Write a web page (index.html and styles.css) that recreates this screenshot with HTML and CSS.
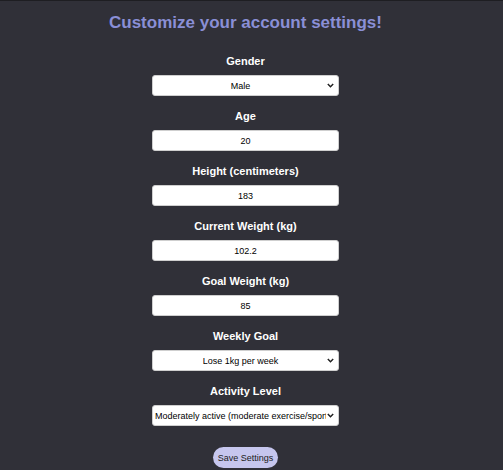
FILE: index.html
```html
<!DOCTYPE html>
<html>
<head>
<meta charset="utf-8">
<link rel="stylesheet" href="styles.css">
</head>
<body>
<div class="page">
  <h1 class="title">Customize your account settings!</h1>
  <form class="form">
    <div class="field">
      <label class="label">Gender</label>
      <select class="control select"><option>Male</option><option>Female</option></select>
    </div>
    <div class="field">
      <label class="label">Age</label>
      <input class="control" type="text" value="20">
    </div>
    <div class="field">
      <label class="label">Height (centimeters)</label>
      <input class="control" type="text" value="183">
    </div>
    <div class="field">
      <label class="label">Current Weight (kg)</label>
      <input class="control" type="text" value="102.2">
    </div>
    <div class="field">
      <label class="label">Goal Weight (kg)</label>
      <input class="control" type="text" value="85">
    </div>
    <div class="field">
      <label class="label">Weekly Goal</label>
      <select class="control select"><option>Lose 1kg per week</option></select>
    </div>
    <div class="field">
      <label class="label">Activity Level</label>
      <select class="control select select-left"><option>Moderately active (moderate exercise/sports 3-5 days/week)</option></select>
    </div>
    <button class="save" type="button">Save Settings</button>
  </form>
</div>
</body>
</html>
```
FILE: styles.css
```css
html, body {
  margin: 0;
  padding: 0;
  background: #303038;
  height: 100%;
}
body {
  border-top: 1px solid #1e1e22;
  box-sizing: border-box;
  font-family: "Liberation Sans", Arial, sans-serif;
}
.page {
  width: 491px;
  display: flex;
  flex-direction: column;
  align-items: center;
}
.title {
  margin: 12px 0 0;
  font-size: 17px;
  line-height: 20px;
  font-weight: bold;
  color: #8a8fd6;
}
.form {
  margin-top: 21px;
  display: flex;
  flex-direction: column;
  align-items: center;
}
.field {
  display: flex;
  flex-direction: column;
  align-items: center;
  margin-bottom: 13px;
}
.label {
  color: #ffffff;
  font-size: 11px;
  line-height: 15px;
  font-weight: bold;
  margin-bottom: 6px;
}
.control {
  width: 187px;
  height: 21px;
  box-sizing: border-box;
  border: 1px solid #cfcfcf;
  border-radius: 3px;
  background-color: #ffffff;
  font-family: "Liberation Sans", Arial, sans-serif;
  font-size: 9px;
  color: #000;
  text-align: center;
  text-align-last: center;
  padding: 0 2px;
  outline: none;
}
.select {
  -webkit-appearance: none;
  appearance: none;
  padding: 0 12px 0 2px;
  background-image: url("data:image/svg+xml,%3Csvg xmlns='http://www.w3.org/2000/svg' width='7' height='5' viewBox='0 0 7 5'%3E%3Cpath d='M0.8 1 L3.5 3.7 L6.2 1' fill='none' stroke='%23222' stroke-width='1.5'/%3E%3C/svg%3E");
  background-repeat: no-repeat;
  background-position: right 4px center;
  background-size: 7px 5px;
}
.select-left {
  text-align: left;
  text-align-last: left;
}
.save {
  margin-top: 8px;
  width: 65px;
  height: 21px;
  border: none;
  border-radius: 11px;
  background: #c6c6ee;
  color: #202020;
  font-family: "Liberation Sans", Arial, sans-serif;
  font-size: 9px;
  padding: 0;
}
```
